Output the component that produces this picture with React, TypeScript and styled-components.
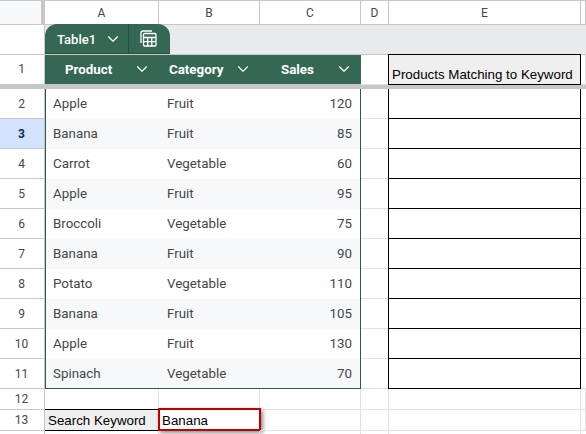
import styled, { createGlobalStyle } from 'styled-components';
import { ChevronDown } from 'lucide-react';

const COLUMNS = ['A', 'B', 'C', 'D', 'E'];

const ROWS = [
  { id: 2, product: 'Apple', category: 'Fruit', sales: 120 },
  { id: 3, product: 'Banana', category: 'Fruit', sales: 85 },
  { id: 4, product: 'Carrot', category: 'Vegetable', sales: 60 },
  { id: 5, product: 'Apple', category: 'Fruit', sales: 95 },
  { id: 6, product: 'Broccoli', category: 'Vegetable', sales: 75 },
  { id: 7, product: 'Banana', category: 'Fruit', sales: 90 },
  { id: 8, product: 'Potato', category: 'Vegetable', sales: 110 },
  { id: 9, product: 'Banana', category: 'Fruit', sales: 105 },
  { id: 10, product: 'Apple', category: 'Fruit', sales: 130 },
  { id: 11, product: 'Spinach', category: 'Vegetable', sales: 70 },
];

const HEADERS = [
  { label: 'Product', inset: 20 },
  { label: 'Category', inset: 10 },
  { label: 'Sales', inset: 21 },
];

const TableIcon = () => (
  <svg width="17" height="17" viewBox="0 0 17 17" fill="none" stroke="#fff" strokeWidth="1.3">
    <path d="M1 13V3C1 1.800 1.800 1 3 1H12" />
    <rect x="3.500" y="3.500" width="12.500" height="12.500" rx="1" />
    <path d="M3.500 7.500H16M7.700 7.500V16M11.800 7.500V16M3.500 11.700H16" />
  </svg>
);

export default function App() {
  return (
    <>
      <GlobalStyle />
      <Sheet>
        <Corner />
        {COLUMNS.map((c) => (
          <ColumnHeader key={c}>{c}</ColumnHeader>
        ))}
        <ColumnHeader />

        <RowHeader />
        <TabBand>
          <TableTab>
            <TabName>
              Table1
              <ChevronDown size={18} strokeWidth={1.5} />
            </TabName>
            <TabAction>
              <TableIcon />
            </TabAction>
          </TableTab>
        </TabBand>

        <RowHeader $lift>1</RowHeader>
        {HEADERS.map((h) => (
          <TableHead key={h.label} $inset={h.inset}>
            <HeadLabel>{h.label}</HeadLabel>
            <ChevronDown size={18} strokeWidth={1.5} />
          </TableHead>
        ))}
        <Cell />
        <MatchHead>Products Matching to Keyword</MatchHead>
        <Cell />

        <FreezeBar />

        {ROWS.map((r, i) => (
          <Row key={r.id}>
            <RowHeader $active={r.id === 3}>{r.id}</RowHeader>
            <TableCell $first $striped={i % 2 === 1} $last={i === ROWS.length - 1}>{r.product}</TableCell>
            <TableCell $striped={i % 2 === 1} $last={i === ROWS.length - 1}>{r.category}</TableCell>
            <TableCell $end $striped={i % 2 === 1} $last={i === ROWS.length - 1}>{r.sales}</TableCell>
            <Cell />
            <MatchCell />
            <Cell />
          </Row>
        ))}

        <RowHeader>12</RowHeader>
        <Cell /><Cell /><Cell /><Cell /><Cell /><Cell />

        <RowHeader>13</RowHeader>
        <KeywordLabel>Search Keyword</KeywordLabel>
        <KeywordInput>Banana</KeywordInput>
        <Cell /><Cell /><Cell /><Cell />

        <RowHeader />
        <Cell /><Cell /><Cell /><Cell /><Cell /><Cell />
      </Sheet>
    </>
  );
}

const GlobalStyle = createGlobalStyle`
  html, body {
    margin: 0;
    padding: 0;
    width: 586px;
    height: 434px;
    overflow: hidden;
    background: #fff;
  }
  * { box-sizing: border-box; }
`;

const Sheet = styled.div`
  display: grid;
  grid-template-columns: 45px 114px 101px 101px 28px 192px 5px;
  grid-template-rows: 25px 30px 30px 4px repeat(10, 30px) 21px 21px 12px;
  font-family: Roboto, 'Liberation Sans', sans-serif;
  font-size: 13.33px;
  color: #444746;
  width: 586px;
  height: 434px;
`;

const Cell = styled.div`
  display: flex;
  align-items: center;
  min-width: 0;
  border-right: 1px solid #e1e1e1;
  border-bottom: 1px solid #e1e1e1;
  &:last-child { border-right: 0; }
`;

const Corner = styled.div`
  background: #f8f9fa;
  border-top: 1px solid #c7c7c7;
  border-right: 4px solid #c7c7c7;
  border-bottom: 1px solid #c7c7c7;
`;

const ColumnHeader = styled.div`
  display: flex;
  align-items: center;
  justify-content: center;
  font-size: 12px;
  color: #444746;
  border-top: 1px solid #c7c7c7;
  border-right: 1px solid #c7c7c7;
  border-bottom: 1px solid #c7c7c7;
`;

const RowHeader = styled.div<{ $active?: boolean; $lift?: boolean }>`
  display: flex;
  align-items: center;
  justify-content: center;
  padding-right: 1px;
  padding-bottom: ${({ $lift }) => ($lift ? '1px' : '0')};
  font-size: 12px;
  color: ${({ $active }) => ($active ? '#0b2a5b' : '#444746')};
  font-weight: ${({ $active }) => ($active ? 700 : 400)};
  background: ${({ $active }) => ($active ? '#d3e3fd' : '#fff')};
  border-right: 1px solid #c7c7c7;
  border-bottom: 1px solid #c7c7c7;
`;

const TabBand = styled.div`
  grid-column: 2 / -1;
  display: flex;
  align-items: flex-end;
  background: #e8eaed;
  border-bottom: 1px solid #c7c7c7;
`;

const TableTab = styled.div`
  display: flex;
  height: 30px;
  width: 125px;
  background: #356854;
  color: #fff;
  border-radius: 12px 12px 0 0;
  border-bottom: 1px solid #24503f;
`;

const TabName = styled.div`
  display: flex;
  align-items: center;
  gap: 8px;
  width: 84px;
  padding: 1px 0 0 12px;
  font-size: 13px;
  font-weight: 500;
  border-right: 1px solid #24503f;
`;

const TabAction = styled.div`
  flex: 1;
  display: flex;
  align-items: center;
  justify-content: center;
  padding-right: 2px;
`;

const TableHead = styled.div<{ $inset: number }>`
  display: flex;
  align-items: center;
  justify-content: space-between;
  padding: 0 8px 1px ${({ $inset }) => $inset}px;
  background: #356854;
  color: #fff;
  border-bottom: 1px solid #c7c7c7;
  &:nth-child(n) svg { flex: none; }
`;

const HeadLabel = styled.span`
  font-size: 13.33px;
  font-weight: 700;
`;

const MatchHead = styled.div`
  display: flex;
  align-items: flex-end;
  margin: -1px 0 0 -1px;
  padding: 0 0 2px 3px;
  background: #efefef;
  border: 1px solid #000;
  font-family: 'Liberation Sans', sans-serif;
  font-size: 13.33px;
  color: #000;
  white-space: nowrap;
`;

const FreezeBar = styled.div`
  grid-column: 1 / -1;
  background: #c7c7c7;
`;

const Row = styled.div`
  display: contents;
`;

const TableCell = styled.div<{ $first?: boolean; $end?: boolean; $striped?: boolean; $last?: boolean }>`
  display: flex;
  align-items: center;
  justify-content: ${({ $end }) => ($end ? 'flex-end' : 'flex-start')};
  padding: 0 8px ${({ $last }) => ($last ? '0' : '2px')} ${({ $first }) => ($first ? '7px' : '8px')};
  background: ${({ $striped }) => ($striped ? '#f6f8f9' : '#fff')};
  border-left: ${({ $first }) => ($first ? '1px solid #2c5a48' : '0')};
  border-right: ${({ $end }) => ($end ? '1px solid #2c5a48' : '0')};
  border-bottom: ${({ $last }) => ($last ? '1px solid #2c5a48' : '0')};
`;

const MatchCell = styled.div`
  margin-left: -1px;
  border: 1px solid #000;
  border-top-width: 0;
`;

const KeywordLabel = styled.div`
  display: flex;
  align-items: center;
  margin-top: -1px;
  padding-left: 3px;
  background: #efefef;
  border-top: 1px solid #000;
  border-bottom: 1px solid #000;
  font-family: 'Liberation Sans', sans-serif;
  font-size: 13.33px;
  color: #000;
`;

const KeywordInput = styled.div`
  display: flex;
  align-items: center;
  margin: -2px -1px 0 -1px;
  padding: 2px 0 0 2px;
  background: #fff;
  border: 2px solid #c00000;
  box-shadow: 2px 2px 4px rgba(0, 0, 0, 0.45);
  font-family: 'Liberation Sans', sans-serif;
  font-size: 13.33px;
  color: #000;
`;
